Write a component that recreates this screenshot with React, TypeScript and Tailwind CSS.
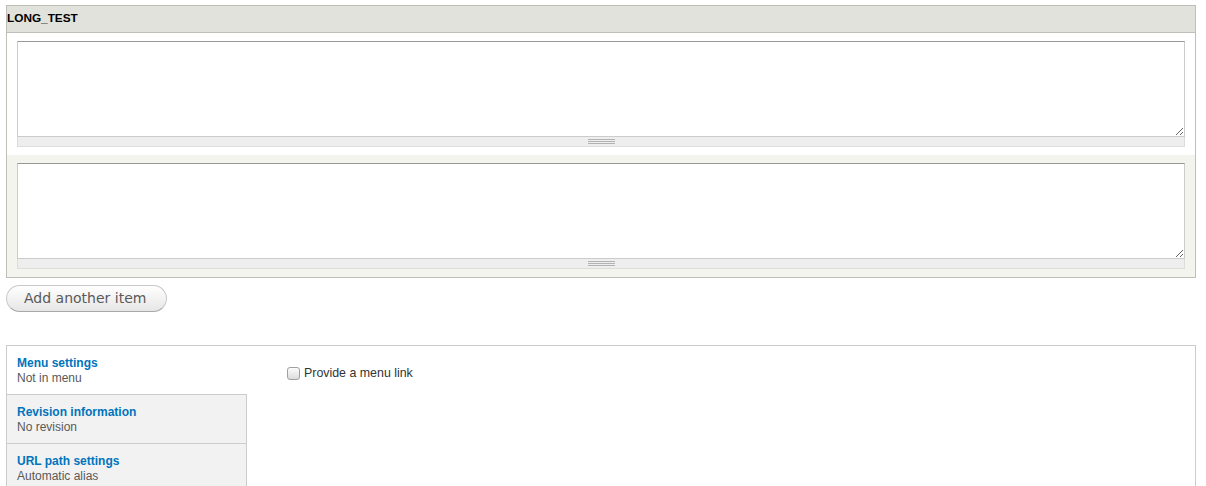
import React from 'react';

const font = { fontFamily: '"Liberation Sans", Arial, sans-serif' };

function Grippie() {
  return (
    <div className="h-[10px] border border-t-0 border-[#dddddd] bg-[#eeeeee] flex items-center justify-center">
      <div className="flex flex-col gap-[1px] w-[27px]">
        <div className="h-px bg-[#b3b3b3]" />
        <div className="h-px bg-[#b3b3b3]" />
        <div className="h-px bg-[#b3b3b3]" />
      </div>
    </div>
  );
}

function TextField() {
  return (
    <div>
      <textarea
        className="block w-full h-[96px] resize-y bg-white border border-[#cccccc] border-t-[#999999] outline-none"
        defaultValue=""
      />
      <Grippie />
    </div>
  );
}

const tabs = [
  { title: 'Menu settings', summary: 'Not in menu', active: true },
  { title: 'Revision information', summary: 'No revision', active: false },
  { title: 'URL path settings', summary: 'Automatic alias', active: false },
];

export default function App() {
  return (
    <div className="h-[486px] overflow-hidden bg-white text-[#333333] pt-[5px] pl-[6px]" style={font}>
      <div className="w-[1190px] border border-[#bebfb9]">
        <div className="bg-[#e1e2dc] border-b border-[#bebfb9] h-[27px] flex items-center">
          <span className="text-[11.8px] font-bold text-black uppercase">long_test</span>
        </div>
        <div className="bg-white px-[10px] pt-[8px] pb-[8px]">
          <TextField />
        </div>
        <div className="bg-[#f3f4ee] px-[10px] pt-[8px] pb-[8px]">
          <TextField />
        </div>
      </div>

      <button
        className="mt-[7px] h-[27px] w-[161px] rounded-full border border-[#c8c8c8] border-b-[#a8a8a8] bg-gradient-to-b from-white to-[#e6e6e6] text-[14px] text-[#5a5a5a] text-left pl-[17px]"
        style={{ fontFamily: '"DejaVu Sans", Verdana, sans-serif' }}
      >
        Add another item
      </button>

      <div className="mt-[33px] w-[1190px] h-[160px] border border-b-0 border-[#cccccc] flex">
        <ul className="w-[240px] shrink-0">
          {tabs.map((t) => (
            <li
              key={t.title}
              className={
                t.active
                  ? 'bg-white border-b border-[#cccccc] pl-[10px] pt-[10px] pb-[8px]'
                  : 'bg-[#f2f2f2] border-b border-r border-[#cccccc] pl-[10px] pt-[10px] pb-[8px]'
              }
            >
              <div className="text-[12px] leading-[15px] font-bold text-[#0074bd]">{t.title}</div>
              <div className="text-[12px] leading-[15px] text-[#595959]">{t.summary}</div>
            </li>
          ))}
        </ul>
        <div className="pl-[40px] pt-[18px]">
          <label className="flex items-center gap-[4px] text-[12.4px] text-[#333333]">
            <span className="w-[13px] h-[13px] rounded-[3px] border border-[#a0a0a0] bg-gradient-to-b from-[#fcfcfc] to-[#dcdcdc]" />
            Provide a menu link
          </label>
        </div>
      </div>
    </div>
  );
}
